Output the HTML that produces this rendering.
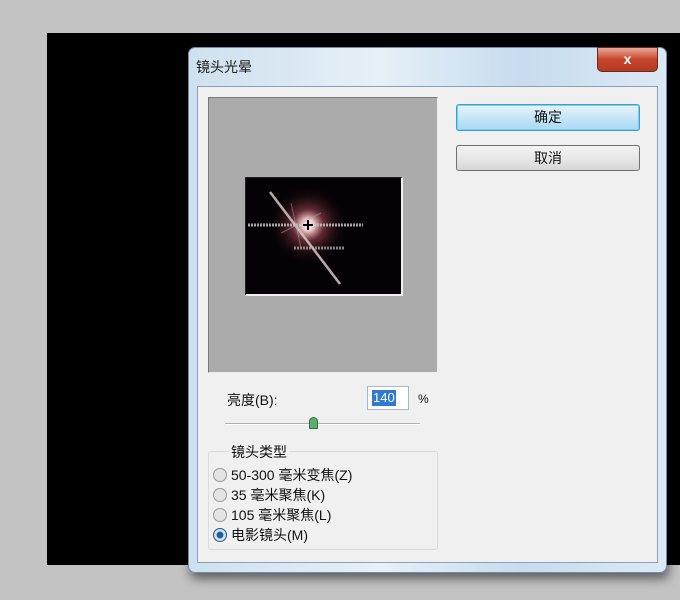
<!DOCTYPE html>
<html><head><meta charset="utf-8"><style>
*{margin:0;padding:0;box-sizing:border-box}
body{width:680px;height:600px;background:#c3c3c3;position:relative;overflow:hidden;font-family:"Liberation Sans","Noto Sans CJK SC",sans-serif;font-size:14px;color:#111}
.abs{position:absolute}
</style></head><body>
<div class="abs" style="left:47px;top:33px;width:640px;height:532px;background:#000"></div>
<!-- dialog -->
<div class="abs" style="left:188px;top:47px;width:479px;height:526px;border-radius:7px;background:linear-gradient(90deg,#cfe0ef,#e6f0f8 40%,#c7dcee 70%,#dce9f5);border:1px solid #6f8aa6;box-shadow:2px 6px 10px rgba(0,0,0,.5)"></div>
<div class="abs" style="left:196px;top:57px;font-size:14px;color:#1a1a1a">镜头光晕</div>
<div class="abs" style="left:597px;top:47px;width:61px;height:25px;border-radius:0 0 5px 5px;background:linear-gradient(#e9a99a,#c8442c 50%,#b33a22);border:1px solid #6b2a20;color:#fff;text-align:center;font-weight:bold;font-size:14px;line-height:22px">x</div>
<div class="abs" style="left:197px;top:86px;width:461px;height:477px;background:#f0f0f0;border:1px solid #8da2b8"></div>
<!-- preview -->
<div class="abs" style="left:208px;top:97px;width:230px;height:276px;background:#ababab;border:1px solid #7a7a7a;border-right-color:#eee;border-bottom-color:#eee"></div>
<div class="abs" style="left:245px;top:177px;width:158px;height:119px;background:#050205;border:1px solid #222;border-right:2px solid #eee;border-bottom:2px solid #eee">
<svg width="156" height="117" style="position:absolute;left:0;top:0">
<defs><radialGradient id="g"><stop offset="0" stop-color="#fff"/><stop offset=".15" stop-color="#f0c8c8"/><stop offset=".4" stop-color="#8a3a48" stop-opacity=".7"/><stop offset="1" stop-color="#000" stop-opacity="0"/></radialGradient></defs>
<circle cx="62" cy="47" r="40" fill="url(#g)"/>
<line x1="2" y1="47" x2="117" y2="47" stroke="#ccc" stroke-width="3" stroke-dasharray="2 1" opacity=".8"/>
<line x1="48" y1="70" x2="98" y2="70" stroke="#bbb" stroke-width="3" stroke-dasharray="2 1" opacity=".7"/>
<line x1="24" y1="14" x2="94" y2="106" stroke="#d8c8c8" stroke-width="2.5" opacity=".85"/>
<line x1="45" y1="25" x2="55" y2="70" stroke="#aaa" stroke-width="1" opacity=".5"/>
<line x1="35" y1="55" x2="75" y2="35" stroke="#aaa" stroke-width="1" opacity=".5"/>
<path d="M62 42v10M57 47h10" stroke="#000" stroke-width="2"/>
</svg></div>
<!-- buttons -->
<div class="abs" style="left:456px;top:104px;width:184px;height:27px;border-radius:3px;border:1px solid #3c9dd0;background:linear-gradient(#e8f5fd,#c7e6f8 50%,#a9d8f3);box-shadow:inset 0 0 0 1px #7ed0f3;text-align:center;line-height:25px">确定</div>
<div class="abs" style="left:456px;top:145px;width:184px;height:26px;border-radius:3px;border:1px solid #707070;background:linear-gradient(#f4f4f4,#e8e8e8 50%,#d6d6d6);text-align:center;line-height:24px">取消</div>
<!-- brightness -->
<div class="abs" style="left:227px;top:390px">亮度(B):</div>
<div class="abs" style="left:367px;top:386px;width:42px;height:24px;background:#fff;border:1px solid #a9b8c8"><span style="position:absolute;left:4px;top:3px;background:#3079d0;color:#fff;font-size:13px;line-height:16px;padding:0 1px">140</span></div>
<div class="abs" style="left:418px;top:392px;font-size:12px">%</div>
<div class="abs" style="left:225px;top:423px;width:195px;height:2px;background:#b0b0b0;border-bottom:1px solid #fff"></div>
<div class="abs" style="left:309px;top:417px;width:9px;height:12px;background:#5fae6f;border:1px solid #2f7040;border-radius:5px 5px 1px 1px"></div>
<!-- group -->
<div class="abs" style="left:208px;top:451px;width:230px;height:99px;border:1px solid #dcdcdc;border-radius:3px"></div>
<div class="abs" style="left:229px;top:442px;background:#f0f0f0;padding:0 2px">镜头类型</div>
<div class="abs" style="left:213px;top:465px;line-height:20px">
<div><span style="display:inline-block;width:14px;height:14px;border-radius:50%;border:1px solid #999;background:#e4e4e4;vertical-align:-2px;margin-right:4px"></span>50-300 毫米变焦(Z)</div>
<div><span style="display:inline-block;width:14px;height:14px;border-radius:50%;border:1px solid #999;background:#e4e4e4;vertical-align:-2px;margin-right:4px"></span>35 毫米聚焦(K)</div>
<div><span style="display:inline-block;width:14px;height:14px;border-radius:50%;border:1px solid #999;background:#e4e4e4;vertical-align:-2px;margin-right:4px"></span>105 毫米聚焦(L)</div>
<div><span style="display:inline-block;width:14px;height:14px;border-radius:50%;border:1px solid #2a5a80;background:radial-gradient(#1c5f95 35%,#cfe3f1 45%);vertical-align:-2px;margin-right:4px"></span>电影镜头(M)</div>
</div>
</body></html>
